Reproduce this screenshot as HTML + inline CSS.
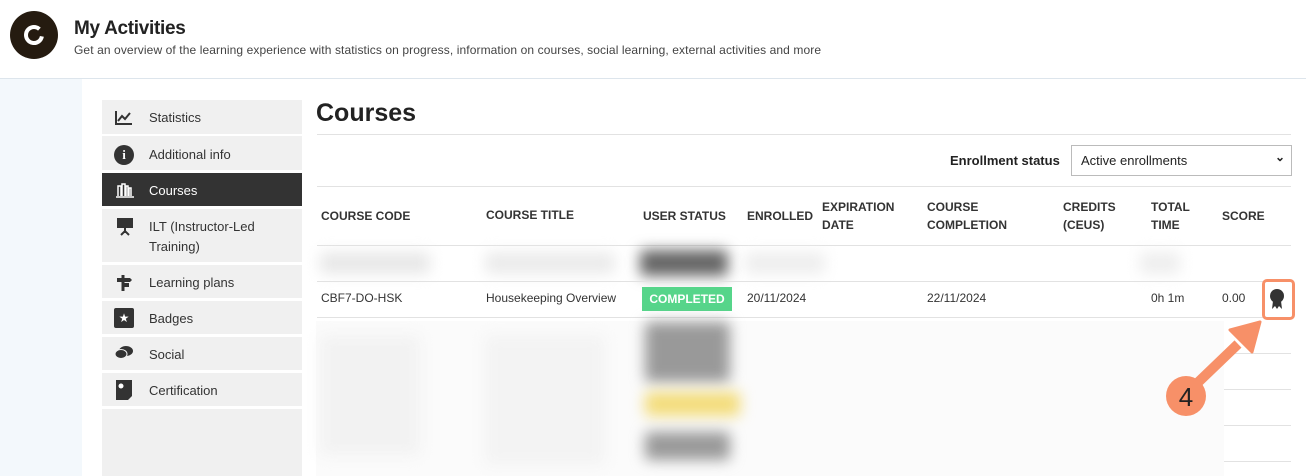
<!DOCTYPE html>
<html><head><meta charset="utf-8"><style>
*{margin:0;padding:0;box-sizing:border-box}
body{width:1306px;height:476px;overflow:hidden;background:#fff;font-family:"Liberation Sans",sans-serif;color:#333;position:relative}
.a{position:absolute;white-space:nowrap}
.side{position:absolute;left:102px;width:200px;background:#f0f0f0;border-top:2px solid #fff}
.side .t{position:absolute;left:47px;font-size:13px;color:#333}
.hd{font-size:12px;font-weight:bold;color:#333;position:absolute;line-height:18px}
.ln{position:absolute;height:1px;background:#e2e2e2}
.blur{position:absolute;filter:blur(7px);border-radius:4px}
</style></head><body>
<div class="a" style="left:10px;top:11px;width:48px;height:48px;border-radius:50%;background:#251b10"></div>
<svg class="a" style="left:22px;top:23px" width="24" height="24" viewBox="0 0 24 24"><circle cx="12" cy="12" r="8" fill="none" stroke="#fff" stroke-width="4" stroke-dasharray="42 8" transform="rotate(10 12 12)"/></svg>
<div class="a" style="left:74px;top:18px;font-size:19px;color:#222;font-weight:bold;letter-spacing:-0.3px">My Activities</div>
<div class="a" style="left:74px;top:43px;font-size:12px;color:#444;letter-spacing:0.1px">Get an overview of the learning experience with statistics on progress, information on courses, social learning, external activities and more</div>
<div class="a" style="left:0;top:78px;width:1306px;height:1px;background:#dde5ec"></div>
<div class="a" style="left:0;top:79px;width:82px;height:397px;background:#f3f8fc"></div>
<div class="side" style="top:98px;height:36px"><svg class="a" style="left:13px;top:10px" width="18" height="16" viewBox="0 0 18 16"><path d="M1 1V14H17" fill="none" stroke="#333" stroke-width="2"/><path d="M3 11L7 6L10 9L15 3" fill="none" stroke="#333" stroke-width="2"/></svg><div class="t" style="top:10px">Statistics</div></div>
<div class="side" style="top:134px;height:36px"><div class="a" style="left:12px;top:9px;width:20px;height:20px;border-radius:50%;background:#333;color:#fff;font-size:13px;font-weight:bold;text-align:center;line-height:20px;font-family:'Liberation Serif',serif">i</div><div class="t" style="top:11px">Additional info</div></div>
<div class="side" style="top:170px;height:36px;background:#333;border-top:3px solid #fff"><svg class="a" style="left:13px;top:9px" width="20" height="16"><path d="M1 15H19M3 14V4H6V14M7 14V2H10V14M11 14V4H13V14M14 14V6H16V14" stroke="#fff" fill="none" stroke-width="1.5"/></svg><div class="t" style="top:10px;color:#fff">Courses</div></div>
<div class="side" style="top:206px;height:56px;border-top:3px solid #fff"><svg class="a" style="left:13px;top:7px" width="20" height="20"><rect x="2" y="2" width="16" height="10" fill="#333"/><path d="M10 12V17M6 19L10 15L14 19" stroke="#333" stroke-width="2" fill="none"/></svg><div class="t" style="top:8px;line-height:20px">ILT (Instructor-Led<br>Training)</div></div>
<div class="side" style="top:262px;height:36px;border-top:3px solid #fff"><svg class="a" style="left:13px;top:9px" width="18" height="18"><path d="M8 1V17" stroke="#333" stroke-width="3"/><path d="M2 4H15L17 6L15 8H2Z M9 9H14V13H9Z" fill="#333"/></svg><div class="t" style="top:10px">Learning plans</div></div>
<div class="side" style="top:298px;height:36px;border-top:3px solid #fff"><div class="a" style="left:12px;top:7px;width:20px;height:20px;border-radius:2px;background:#333;color:#fff;font-size:12px;text-align:center;line-height:20px">★</div><div class="t" style="top:10px">Badges</div></div>
<div class="side" style="top:334px;height:36px;border-top:3px solid #fff"><svg class="a" style="left:12px;top:8px" width="20" height="16"><ellipse cx="12" cy="6" rx="7" ry="5" fill="#333"/><ellipse cx="7" cy="9" rx="6" ry="4.5" fill="#333" stroke="#f0f0f0" stroke-width="1"/></svg><div class="t" style="top:10px">Social</div></div>
<div class="side" style="top:370px;height:36px;border-top:3px solid #fff"><svg class="a" style="left:14px;top:7px" width="16" height="20"><path d="M0 0H16V16L12 20H0Z" fill="#333"/><circle cx="5" cy="6" r="2.5" fill="#fff"/></svg><div class="t" style="top:10px">Certification</div></div>
<div class="side" style="top:406px;height:70px;border-top:3px solid #fff"></div>
<div class="a" style="left:316px;top:99px;font-size:25px;font-weight:bold;color:#222">Courses</div>
<div class="ln" style="left:317px;top:134px;width:974px"></div>
<div class="a" style="left:950px;top:153px;font-size:13px;font-weight:bold;color:#222">Enrollment status</div>
<div class="a" style="left:1071px;top:145px;width:221px;height:31px;border:1px solid #bbb;background:#fff;font-size:13px;color:#222;padding:7px 9px">Active enrollments<span style="position:absolute;right:6px;top:4px;font-size:12px;font-weight:bold">⌄</span></div>
<div class="ln" style="left:317px;top:186px;width:974px"></div>
<div class="hd" style="left:321px;top:207px">COURSE CODE</div>
<div class="hd" style="left:486px;top:206px">COURSE TITLE</div>
<div class="hd" style="left:643px;top:207px">USER STATUS</div>
<div class="hd" style="left:747px;top:207px">ENROLLED</div>
<div class="hd" style="left:822px;top:198px">EXPIRATION<br>DATE</div>
<div class="hd" style="left:927px;top:198px">COURSE<br>COMPLETION</div>
<div class="hd" style="left:1063px;top:198px">CREDITS<br>(CEUS)</div>
<div class="hd" style="left:1151px;top:198px">TOTAL<br>TIME</div>
<div class="hd" style="left:1222px;top:207px">SCORE</div>
<div class="ln" style="left:317px;top:245px;width:974px"></div>
<div class="blur" style="left:320px;top:252px;width:110px;height:22px;background:#e8e8e8"></div>
<div class="blur" style="left:485px;top:252px;width:130px;height:22px;background:#ebebeb"></div>
<div class="blur" style="left:640px;top:250px;width:88px;height:26px;background:#666"></div>
<div class="blur" style="left:745px;top:252px;width:80px;height:22px;background:#eee"></div>
<div class="blur" style="left:1140px;top:252px;width:40px;height:22px;background:#eee"></div>
<div class="ln" style="left:317px;top:281px;width:974px"></div>
<div class="a" style="left:321px;top:291px;font-size:12px">CBF7-DO-HSK</div>
<div class="a" style="left:486px;top:291px;font-size:12px">Housekeeping Overview</div>
<div class="a" style="left:642px;top:287px;width:90px;height:24px;background:#56d58a;color:#fff;font-size:12px;font-weight:bold;text-align:center;line-height:24px">COMPLETED</div>
<div class="a" style="left:747px;top:291px;font-size:12px">20/11/2024</div>
<div class="a" style="left:927px;top:291px;font-size:12px">22/11/2024</div>
<div class="a" style="left:1151px;top:291px;font-size:12px">0h 1m</div>
<div class="a" style="left:1222px;top:291px;font-size:12px">0.00</div>
<div class="ln" style="left:317px;top:317px;width:974px"></div>
<div class="a" style="left:316px;top:321px;width:908px;height:155px;background:#fbfbfb"></div>
<div class="blur" style="left:320px;top:335px;width:100px;height:120px;background:#f2f2f2"></div>
<div class="blur" style="left:485px;top:335px;width:120px;height:130px;background:#f3f3f3"></div>
<div class="blur" style="left:645px;top:322px;width:85px;height:60px;background:#999"></div>
<div class="blur" style="left:645px;top:392px;width:95px;height:24px;background:#f3dc7a"></div>
<div class="blur" style="left:645px;top:432px;width:85px;height:28px;background:#999"></div>
<div class="ln" style="left:1224px;top:353px;width:67px"></div>
<div class="ln" style="left:1224px;top:389px;width:67px"></div>
<div class="ln" style="left:1224px;top:425px;width:67px"></div>
<div class="ln" style="left:1224px;top:461px;width:67px"></div>
<svg class="a" style="left:1268px;top:287px" width="18" height="24" viewBox="0 0 18 24"><circle cx="9" cy="9" r="7" fill="#333"/><path d="M5 14L4 22L7 19L9 22L11 19L14 22L13 14Z" fill="#333"/></svg>
<div class="a" style="left:1262px;top:279px;width:33px;height:41px;border:3px solid #f79068;border-radius:5px"></div>
<svg class="a" style="left:0;top:0" width="1306" height="476"><path d="M1188 392L1238 344" stroke="#f79068" stroke-width="10"/><path d="M1260 322L1230 330L1252 352Z" fill="#f79068" stroke="#f79068" stroke-width="3" stroke-linejoin="round"/><circle cx="1186" cy="396" r="20" fill="#f79068"/><text x="1186" y="406" text-anchor="middle" font-family="Liberation Sans" font-size="26" fill="#222">4</text></svg>
</body></html>
